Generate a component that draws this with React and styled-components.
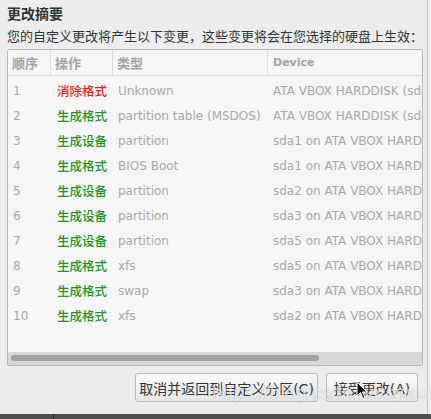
import React from 'react';
import styled, { createGlobalStyle } from 'styled-components';

const GlobalStyle = createGlobalStyle`
    html, body {
        margin: 0;
        padding: 0;
        background: #ededed;
    }
    body {
        font-family: "DejaVu Sans", "Noto Sans CJK SC", sans-serif;
        color: #2e3436;
    }
`;

const rows = [
    { n: 1, op: '消除格式', del: true, type: 'Unknown', dev: 'ATA VBOX HARDDISK (sda)' },
    { n: 2, op: '生成格式', type: 'partition table (MSDOS)', dev: 'ATA VBOX HARDDISK (sda)' },
    { n: 3, op: '生成设备', type: 'partition', dev: 'sda1 on ATA VBOX HARDDISK' },
    { n: 4, op: '生成格式', type: 'BIOS Boot', dev: 'sda1 on ATA VBOX HARDDISK' },
    { n: 5, op: '生成设备', type: 'partition', dev: 'sda2 on ATA VBOX HARDDISK' },
    { n: 6, op: '生成设备', type: 'partition', dev: 'sda3 on ATA VBOX HARDDISK' },
    { n: 7, op: '生成设备', type: 'partition', dev: 'sda5 on ATA VBOX HARDDISK' },
    { n: 8, op: '生成格式', type: 'xfs', dev: 'sda5 on ATA VBOX HARDDISK' },
    { n: 9, op: '生成格式', type: 'swap', dev: 'sda3 on ATA VBOX HARDDISK' },
    { n: 10, op: '生成格式', type: 'xfs', dev: 'sda2 on ATA VBOX HARDDISK' },
];

export default function App() {
    return (
        <Page>
            <GlobalStyle />
            <Dialog>
                <Title>更改摘要</Title>
                <Subtitle>您的自定义更改将产生以下变更，这些变更将会在您选择的硬盘上生效：</Subtitle>
                <TableBox>
                    <HeaderRow>
                        <HeaderCell>顺序</HeaderCell>
                        <HeaderCell>操作</HeaderCell>
                        <HeaderCell>类型</HeaderCell>
                        <HeaderCell $latin $last>Device</HeaderCell>
                    </HeaderRow>
                    <Body>
                        {rows.map((r) => (
                            <Row key={r.n}>
                                <Cell>{r.n}</Cell>
                                <OpCell $del={r.del}>{r.op}</OpCell>
                                <Cell>{r.type}</Cell>
                                <Cell>{r.dev}</Cell>
                            </Row>
                        ))}
                    </Body>
                    <Trough>
                        <Slider />
                    </Trough>
                </TableBox>
                <Actions>
                    <Button $w={183}>取消并返回到自定义分区(C)</Button>
                    <Button $w={92}>接受更改(A)</Button>
                </Actions>
                <Watermark>https://blog.csdn.net/zuozewei</Watermark>
                <Cursor viewBox="0 0 12 19" width="12" height="19">
                    <path d="M1 1 L1 15 L4.5 11.5 L7 17.5 L9 16.5 L6.5 11 L11 11 Z" fill="#111" stroke="#fff" strokeWidth="1" />
                </Cursor>
            </Dialog>
            <BottomBar>
                <BarSegment />
            </BottomBar>
        </Page>
    );
}

const Page = styled.div`
    width: 431px;
    height: 419px;
    display: flex;
    flex-direction: column;
    overflow: hidden;
`;

const Dialog = styled.div`
    position: relative;
    width: 428px;
    flex: 1;
    box-sizing: border-box;
    padding: 4px 4px 0 7px;
    border-right: 1px solid #c4c4c4;
    display: flex;
    flex-direction: column;
`;

const Title = styled.div`
    font-size: 14px;
    font-weight: bold;
    line-height: 18px;
    font-family: "Noto Sans CJK SC", sans-serif;
`;

const Subtitle = styled.div`
    margin-top: 5px;
    font-size: 13px;
    line-height: 18px;
    white-space: nowrap;
    font-family: "Noto Sans CJK SC", sans-serif;
`;

const TableBox = styled.div`
    margin-top: 4px;
    height: 317px;
    box-sizing: border-box;
    border: 1px solid #b6b6b6;
    border-radius: 2px;
    background: #f6f6f6;
    display: flex;
    flex-direction: column;
    overflow: hidden;
`;

const columns = '43px 62px 155px 1fr';

const HeaderRow = styled.div`
    display: grid;
    grid-template-columns: ${columns};
    height: 25px;
    border-bottom: 1px solid #dcdcdc;
    flex-shrink: 0;
`;

const HeaderCell = styled.div`
    display: flex;
    align-items: center;
    padding-left: ${(p) => (p.$latin ? '5px' : '4px')};
    border-right: ${(p) => (p.$last ? 'none' : '1px solid #dedede')};
    color: #a4a4a4;
    font-weight: bold;
    font-size: ${(p) => (p.$latin ? '11px' : '13px')};
    font-family: "DejaVu Sans", "Noto Sans CJK SC", sans-serif;
    white-space: nowrap;
`;

const Body = styled.div`
    flex: 1;
    padding-top: 2px;
    overflow: hidden;
`;

const Row = styled.div`
    display: grid;
    grid-template-columns: ${columns};
    height: 25px;
    align-items: center;
`;

const Cell = styled.div`
    padding-left: 5px;
    font-size: 12px;
    color: #a8a8a8;
    white-space: nowrap;
    overflow: hidden;
`;

const OpCell = styled.div`
    padding-left: 6px;
    font-size: 12.5px;
    font-weight: 500;
    font-family: "Noto Sans CJK SC", sans-serif;
    color: ${(p) => (p.$del ? '#ee1d1d' : '#1f941f')};
    white-space: nowrap;
`;

const Trough = styled.div`
    height: 13px;
    flex-shrink: 0;
    background: #d8d8d8;
    padding: 3px 3px 0 3px;
    box-sizing: border-box;
`;

const Slider = styled.div`
    width: 308px;
    height: 6px;
    border-radius: 3px;
    background: #a2a2a2;
`;

const Actions = styled.div`
    display: flex;
    justify-content: flex-end;
    gap: 8px;
    margin-top: 7px;
    margin-right: 5px;
`;

const Button = styled.button`
    width: ${(p) => p.$w}px;
    height: 29px;
    padding: 0;
    border: 1px solid #b8b8b8;
    border-radius: 3px;
    background: linear-gradient(#fafafa, #e6e6e6);
    color: #2e3436;
    font-size: 14px;
    font-family: "DejaVu Sans", "Noto Sans CJK SC", sans-serif;
    white-space: nowrap;
`;

const Watermark = styled.div`
    position: absolute;
    left: 212px;
    top: 382px;
    font-family: "Liberation Sans", sans-serif;
    font-size: 20px;
    color: rgba(255, 255, 255, 0.7);
    text-shadow: 0 0 1px rgba(0, 0, 0, 0.25);
    letter-spacing: -0.3px;
    pointer-events: none;
    white-space: nowrap;
`;

const Cursor = styled.svg`
    position: absolute;
    left: 356px;
    top: 381px;
`;

const BottomBar = styled.div`
    height: 5px;
    background: #4e4e4e;
    display: flex;
`;

const BarSegment = styled.div`
    width: 53px;
    border-right: 1px solid #2c2c2c;
`;
